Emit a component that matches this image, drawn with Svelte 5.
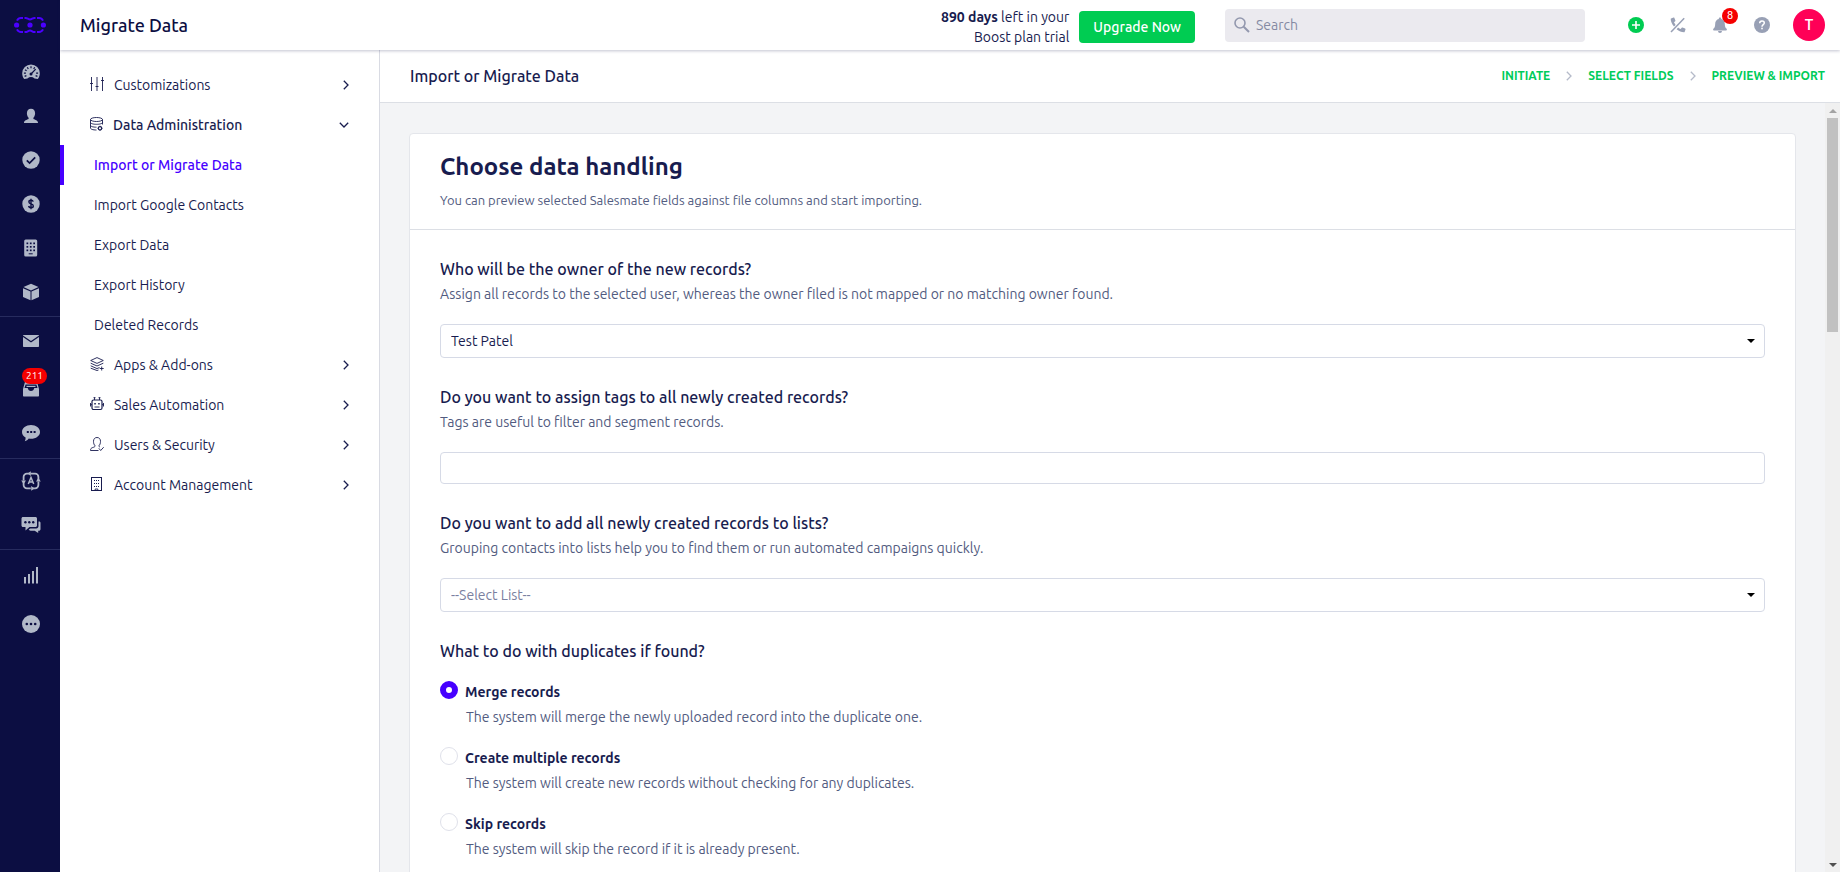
<script>
  const railGroups = [
    { size: 'a', items: ['Dashboard', 'Contacts', 'Activities', 'Deals', 'Companies', 'Products'] },
    { size: 'b', items: ['Email', 'Inbox', 'Text'] },
    { size: 'a', items: ['Automation', 'Chats'] },
    { size: 'c', items: ['Reports', 'More'] }
  ];

  const dataPages = ['Import or Migrate Data', 'Import Google Contacts', 'Export Data', 'Export History', 'Deleted Records'];
  const sections = [
    { name: 'Customizations' },
    { name: 'Data Administration', pages: dataPages },
    { name: 'Apps & Add-ons' },
    { name: 'Sales Automation' },
    { name: 'Users & Security' },
    { name: 'Account Management' }
  ];

  const steps = ['Initiate', 'Select Fields', 'Preview & Import'];

  const duplicateModes = [
    { id: 'merge', title: 'Merge records', text: 'The system will merge the newly uploaded record into the duplicate one.' },
    { id: 'create', title: 'Create multiple records', text: 'The system will create new records without checking for any duplicates.' },
    { id: 'skip', title: 'Skip records', text: 'The system will skip the record if it is already present.' }
  ];

  let mode = $state('merge');
  let owner = $state('Test Patel');
  let tags = $state('');
  let list = $state('');
</script>

{#snippet railIcon(name)}
  <svg width="20" height="20" viewBox="0 0 20 20" fill="currentColor" aria-hidden="true">
    {#if name === 'Dashboard'}
      <path d="M3.2 17C1.8 15.3 1.2 13.4 1.2 11.3a8.8 8.8 0 0 1 17.6 0c0 2.1-.6 4-2 5.7l-3.2-.6a6 6 0 0 0-7.2 0z" />
      <g stroke="#0c0e42" stroke-width="1.2" fill="none">
        <path d="M10 4.2v2M6.3 5.2l1 1.8M13.7 5.2l-1 1.8M4 7.8l1.600 1M2.900 11.200h2M15.100 11.200h2M3.600 14.400l1.800-.8M16.400 14.400l-1.800-.8M14.700 7.200 10 12" />
      </g>
      <circle cx="10" cy="12" r="1.5" fill="#0c0e42" />
    {:else if name === 'Contacts'}
      <path d="M10 2.800c2.700 0 4.100 1.900 4.100 4.400 0 1.800-.7 3.500-1.700 4.500v1.200c1.700.9 4.600 1.200 4.600 3.800v.3H3v-.3c0-2.600 2.900-2.900 4.600-3.800v-1.200c-1-1-1.700-2.700-1.700-4.500 0-2.500 1.400-4.400 4.100-4.400z" />
    {:else if name === 'Activities'}
      <circle cx="10" cy="10" r="8.700" />
      <path d="m5.800 10.300 2.800 2.700 5.600-5.700" fill="none" stroke="#0c0e42" stroke-width="1.700" />
    {:else if name === 'Deals'}
      <circle cx="10" cy="10" r="8.700" />
      <path d="M12.200 7.700c-.2-1-1-1.400-2.200-1.400s-2.100.6-2.100 1.700c0 2.600 4.400 1.200 4.400 3.900 0 1.100-.9 1.800-2.300 1.800-1.300 0-2.200-.6-2.400-1.700M10 4.800v10.400" fill="none" stroke="#0c0e42" stroke-width="1.400" />
    {:else if name === 'Companies'}
      <rect x="3.200" y="1.500" width="13" height="17" rx="1.500" />
      <g fill="#0c0e42">
        {#each [4.5, 8, 11.5] as y}
          {#each [5.5, 8.9, 12.3] as x}<rect {x} {y} width="1.700" height="1.700" />{/each}
        {/each}
        <rect x="7.700" y="15.300" width="4" height="1" />
      </g>
    {:else if name === 'Products'}
      <path d="m10 1.800 7.500 3.300L10 8.500 2.500 5.100z M2 6.300l7.500 3.200v8.700L2 15z M18 6.300l-7.500 3.200v8.700L18 15z" />
    {:else if name === 'Email'}
      <path d="M3 4h14c.6 0 1 .4 1 1v10c0 .6-.4 1-1 1H3c-.6 0-1-.4-1-1V5c0-.6.4-1 1-1z" />
      <path d="m2 5.200 8 5.600 8-5.600" fill="none" stroke="#0c0e42" stroke-width="1.300" />
    {:else if name === 'Inbox'}
      <path d="M4 5h12l2 7v6.500c0 .6-.4 1-1 1H3c-.6 0-1-.4-1-1V12z" />
      <path d="M4.600 7.500h10.800l1.100 3.500h-3.200c-.4 1.800-1.600 3-3.300 3s-2.900-1.200-3.300-3H3.500z" fill="#0c0e42" />
      <path d="M5.500 8.800h9V10h-9z" />
    {:else if name === 'Text'}
      <path d="M10 2c5 0 9 3 9 6.900 0 3.800-4 6.900-9 6.900-.8 0-1.500-.1-2.200-.2-1 1.300-2.400 2.300-4 2.600.6-1.100.9-2.400.8-3.700C2.400 13.200 1 11.200 1 8.900 1 5 5 2 10 2z" />
      <g fill="#0c0e42"><rect x="5.800" y="8" width="2" height="2" /><rect x="9.200" y="8" width="2" height="2" /><rect x="12.600" y="8" width="2" height="2" /></g>
    {:else if name === 'Automation'}
      <g fill="none" stroke="currentColor" stroke-width="1.800">
        <path d="M9.500 2.600h4.600c1.800 0 3.300 1.500 3.300 3.300V9M17.400 10.500v3.600c0 1.800-1.500 3.300-3.300 3.300h-2.500M9.800 17.400H5.900c-1.800 0-3.300-1.500-3.300-3.300V11M2.600 9.500V5.900c0-1.800 1.500-3.300 3.300-3.300h2" />
        <path d="m7.300 13 2.700-6.500 2.700 6.500M8.200 11h3.600" stroke-width="1.500" />
      </g>
      <path d="M9.800.2v4.800L6.500 2.600zM19.800 10.400H15l2.400-3.300zM10.200 19.800V15l3.300 2.400zM.2 9.600H5l-2.400 3.300z" />
    {:else if name === 'Chats'}
      <path d="M2 2h12.500c.8 0 1.500.7 1.500 1.500v7c0 .8-.7 1.500-1.500 1.500H8.500L4.500 15.500V12H2C1.200 12 .5 11.300.5 10.500v-7C.5 2.700 1.200 2 2 2z" />
      <path d="M17.500 6.500h.7c.8 0 1.300.6 1.300 1.400v6.400c0 .8-.7 1.500-1.500 1.500h-.8V18l-3.500-2.200H9.500c-.8 0-1.500-.5-1.700-1.200l1.500-1.200h6c1.200 0 2.200-1 2.200-2.200z" />
      <g fill="#0c0e42"><circle cx="4.400" cy="7.200" r="1.200" /><circle cx="8.300" cy="7.200" r="1.200" /><circle cx="12.200" cy="7.200" r="1.200" /></g>
    {:else if name === 'Reports'}
      <path d="M3 12h2v6.500H3zM7 9h2v9.500H7zM11 6h2v12.500h-2zM15 2h2v16.500h-2z" />
    {:else}
      <circle cx="10" cy="10" r="9" />
      <g fill="#0c0e42"><circle cx="5.800" cy="10" r="1.300" /><circle cx="10" cy="10" r="1.300" /><circle cx="14.200" cy="10" r="1.300" /></g>
    {/if}
  </svg>
{/snippet}

{#snippet sectionIcon(name)}
  <svg class="glyph" width="14" height="14" viewBox="0 0 14 14" fill="none" stroke="currentColor" stroke-width="0.9" aria-hidden="true">
    {#if name === 'Customizations'}
      <path d="M1.500 0v14M7 0v14M12.500 0v14M0 6.500h3M5.500 9.500h3M11 3.500h3" />
    {:else if name === 'Data Administration'}
      <ellipse cx="6.500" cy="2.500" rx="6" ry="2" />
      <path d="M.5 2.500v8.500c0 1.200 2.300 2 6 2M12.500 2.500v5M.5 5.400c0 1.100 2.700 1.900 6 1.900s6-.8 6-1.900M.5 8.300c0 1.100 2.500 1.900 6 1.900" />
      <circle cx="10" cy="11.300" r="1.700" stroke-width="1.200" />
      <path d="M10 8.800v1M10 12.900v1M7.700 11.300h-.5M12.800 11.300h-.5" />
    {:else if name === 'Apps & Add-ons'}
      <path d="M7 .6 13.300 3.500 7 6.400.7 3.500zM.7 6.200 7 9l6.300-2.800M.7 8.800 7 11.600l2.500-1.100M.7 11.200 7 13.500l1.500-.5M11.700 9.500v4M9.700 11.500h4" />
    {:else if name === 'Sales Automation'}
      <rect x="2" y="3" width="10" height="9.500" rx="1.500" stroke-width="1.200" />
      <path d="M4.500 3V.5M9.500 3V.5M3.500.7h2M8.500.7h2M.5 6v3.500M13.500 6v3.500M0 7.700h2M12 7.700h2M4.500 10h5" />
      <path d="M4.300 6.700h1.500M8.200 6.700h1.500" stroke-width="1.600" />
    {:else if name === 'Users & Security'}
      <path d="M8.500 13.500H.5c0-1.900.8-2.500 2.300-3 1.300-.4 2.300-.7 2.300-1.700C4 7.800 3.500 6.200 3.500 4.300 3.500 2 4.800.5 7 .5s3.500 1.500 3.500 3.800c0 1.900-.5 3.500-1.600 4.500 0 .7.300 1 .9 1.300M8.800 11.300l1.900 2.200 3-3.300" />
    {:else}
      <rect x="1.500" y=".5" width="10" height="13" stroke-width="1" />
      <path d="M4 3.500h1M6 3.500h1M8 3.500h1M4 6.500h1M6 6.500h1M8 6.500h1M4 9.500h1M6 9.500h1M8 9.500h1" stroke-width="1.200" />
      <path d="M5.200 13.500v-1.500h2.600v1.500" />
    {/if}
  </svg>
{/snippet}

{#snippet chevron()}
  <svg class="chevron" width="6" height="10" viewBox="0 0 6 10" fill="none" stroke="currentColor" stroke-width="1.300" aria-hidden="true"><path d="m.8.8 4.200 4.200L.8 9.200" /></svg>
{/snippet}

<div class="app">
  <nav class="rail" aria-label="Main">
    <a class="logo" href="#home" aria-label="Home">
      <svg width="32" height="16" viewBox="0 0 32 16" fill="none" stroke="#4b00ff" stroke-width="2" aria-hidden="true">
        <path d="M9 1H6.800C5 1 3.800 2 3 3.600M3 12.400C3.800 14 5 15 6.800 15H9M10.500 1h1.200c1.600 0 2.600 1.500 4.300 1.500S18.700 1 20.300 1h1.200M10.500 15h1.200c1.600 0 2.600-1.500 4.300-1.500s2.700 1.500 4.300 1.500h1.200M23 1h2.200C27 1 28.200 2 29 3.600M29 12.400C28.200 14 27 15 25.200 15H23" />
        <g fill="#4b00ff" stroke="none"><circle cx="2.600" cy="8" r="2.600" /><circle cx="16" cy="8" r="2.600" /><circle cx="29.400" cy="8" r="2.600" /></g>
      </svg>
    </a>
    {#each railGroups as group}
      <ul class="group {group.size}">
        {#each group.items as item}
          <li>
            <a href="#{item.toLowerCase()}" aria-label={item}>
              {@render railIcon(item)}
              {#if item === 'Inbox'}<span class="count">211</span>{/if}
            </a>
          </li>
        {/each}
      </ul>
    {/each}
  </nav>

  <div class="page">
    <header class="topbar">
      <h1>Migrate Data</h1>
      <p class="trial"><b>890 days</b> left in your<br />Boost plan trial</p>
      <button class="upgrade">Upgrade Now</button>
      <label class="search">
        <svg width="16" height="16" viewBox="0 0 16 16" fill="none" stroke="currentColor" aria-hidden="true"><circle cx="6" cy="6" r="5" stroke-width="1.600" /><path d="m9.700 9.700 5.300 5.300" stroke-width="2" /></svg>
        <input type="search" placeholder="Search" aria-label="Search" />
      </label>
      <div class="actions">
        <button class="add" aria-label="Add">
          <svg width="16" height="16" viewBox="0 0 16 16" aria-hidden="true"><circle cx="8" cy="8" r="8" fill="currentColor" /><path d="M8 4v8M4 8h8" stroke="#fff" stroke-width="1.600" /></svg>
        </button>
        <button aria-label="Calls">
          <svg width="16" height="16" viewBox="0 0 16 16" fill="currentColor" aria-hidden="true">
            <path d="M1 1.600 3.500.5c.4-.1.700 0 .9.400l1 2.600c.1.300 0 .6-.2.800L4 5.300c.4.900 1 1.800 1.600 2.600L4 9.500C2 7.300.8 4.600.7 2.100c0-.2.100-.4.300-.5zM8.100 10.400c.8.700 1.700 1.200 2.600 1.600l1-1.200c.2-.2.500-.3.800-.2l2.600 1c.4.200.5.500.4.900l-.9 2.400c-.1.200-.3.400-.6.400-2.600-.1-5-1-7.400-3z" />
            <path d="M14.200 1.200 1 15" fill="none" stroke="currentColor" stroke-width="1.500" />
          </svg>
        </button>
        <button aria-label="Notifications" class="bell">
          <svg width="16" height="16" viewBox="0 0 16 16" fill="currentColor" aria-hidden="true"><path d="M8 .5c.7 0 1.200.5 1.200 1.200v.4c2.200.5 3.600 2.300 3.600 4.700 0 3.200.8 4.200 1.800 5 .5.400.4 1.700-.5 1.700H1.900c-.9 0-1-1.300-.5-1.700 1-.8 1.800-1.800 1.800-5 0-2.400 1.400-4.200 3.600-4.700v-.4C6.800 1 7.300.5 8 .5zM6 14h4a2 2 0 0 1-4 0z" /></svg>
          <span class="bubble">8</span>
        </button>
        <button aria-label="Help">
          <svg width="16" height="16" viewBox="0 0 16 16" aria-hidden="true"><circle cx="8" cy="8" r="8" fill="currentColor" /><path d="M5.700 6.300C5.700 4.900 6.600 4 8 4s2.300.8 2.300 2.100C10.300 7.600 8 7.800 8 9.700" fill="none" stroke="#fff" stroke-width="1.500" /><rect x="7.200" y="10.700" width="1.600" height="1.600" fill="#fff" /></svg>
        </button>
      </div>
      <button class="avatar" aria-label="Account">T</button>
    </header>

    <div class="body">
      <nav class="menu" aria-label="Settings">
        {#each sections as section}
          <button class="section" class:open={section.pages} aria-expanded={!!section.pages}>
            {@render sectionIcon(section.name)}
            <span>{section.name}</span>
            {@render chevron()}
          </button>
          {#if section.pages}
            {#each section.pages as page, i}
              <a class="sub" class:active={i === 0} href="#page-{i}">{page}</a>
            {/each}
          {/if}
        {/each}
      </nav>

      <main>
        <div class="heading">
          <h2>Import or Migrate Data</h2>
          <ol class="steps">
            {#each steps as step, i}
              {#if i}<li class="sep" aria-hidden="true">{@render chevron()}</li>{/if}
              <li>{step}</li>
            {/each}
          </ol>
        </div>

        <div class="scroller">
          <div class="content">
            <form class="card">
              <div class="intro">
                <h3>Choose data handling</h3>
                <p>You can preview selected Salesmate fields against file columns and start importing.</p>
              </div>
              <div class="fields">
                <div class="field">
                  <label for="owner">Who will be the owner of the new records?</label>
                  <p>Assign all records to the selected user, whereas the owner filed is not mapped or no matching owner found.</p>
                  <div class="pick">
                    <select id="owner" bind:value={owner}><option>Test Patel</option></select>
                  </div>
                </div>
                <div class="field">
                  <label for="tags">Do you want to assign tags to all newly created records?</label>
                  <p>Tags are useful to filter and segment records.</p>
                  <input id="tags" type="text" bind:value={tags} />
                </div>
                <div class="field">
                  <label for="list">Do you want to add all newly created records to lists?</label>
                  <p>Grouping contacts into lists help you to find them or run automated campaigns quickly.</p>
                  <div class="pick">
                    <select id="list" class="empty" bind:value={list}><option value="">--Select List--</option></select>
                  </div>
                </div>
                <fieldset>
                  <legend>What to do with duplicates if found?</legend>
                  {#each duplicateModes as m}
                    <div class="choice">
                      <input type="radio" name="duplicates" id={m.id} value={m.id} bind:group={mode} />
                      <label for={m.id}>{m.title}</label>
                      <p>{m.text}</p>
                    </div>
                  {/each}
                </fieldset>
              </div>
            </form>
          </div>
          <div class="scrollbar" aria-hidden="true">
            <i class="up"></i>
            <div class="track"><div class="thumb"></div></div>
            <i class="down"></i>
          </div>
        </div>
      </main>
    </div>
  </div>
</div>

<style>
  :global(body) { margin: 0; }
  .app, .app :global(*) { box-sizing: border-box; }
  .app {
    display: flex;
    height: 100vh;
    overflow: hidden;
    font: 14px/20px Ubuntu, "Noto Sans", sans-serif;
    color: #181c4f;
    background: #fff;
  }
  h1, h2, h3, p, ul, ol, fieldset { margin: 0; padding: 0; }
  ul, ol { list-style: none; }
  a { color: inherit; text-decoration: none; }
  button { border: 0; padding: 0; background: none; font: inherit; color: inherit; cursor: pointer; }
  svg { display: block; flex: none; }

  .rail { flex: none; width: 60px; background: #0c0e42; color: #b1b8c8; }
  .logo { display: flex; align-items: center; justify-content: center; height: 50px; }
  .group li a { position: relative; display: flex; align-items: center; justify-content: center; height: 44px; padding-left: 2px; }
  .group { padding-bottom: 2px; border-bottom: 1px solid #272b5e; }
  .group:last-child { border: 0; }
  .group.b { padding-top: 1px; }
  .group.b li a { height: 46px; }
  .group.c li a { height: 49px; }
  .count {
    position: absolute; top: 4px; left: 22px;
    height: 16px; min-width: 25px; border-radius: 8px;
    background: #f50000; color: #fff; font-size: 10px; line-height: 16px; text-align: center;
  }

  .page { flex: 1; min-width: 0; display: flex; flex-direction: column; }
  .topbar {
    position: relative; z-index: 1; flex: none;
    display: flex; align-items: center; height: 50px; padding: 0 15px 0 20px;
    background: #fff; box-shadow: 0 1px 3px rgba(24, 28, 79, .26);
  }
  h1 { flex: 1; font-size: 18px; line-height: 24px; font-weight: 500; color: #0c0e42; }
  .trial { text-align: right; padding-top: 4px; }
  .upgrade {
    height: 32px; margin: 4px 30px 0 10px; padding: 0 14px; border-radius: 4px;
    background: #00cc52; color: #fff; font-weight: 500;
  }
  .search {
    display: flex; align-items: center; gap: 6px; flex: 0 1 360px; height: 33px; padding: 0 9px;
    border-radius: 4px; background: #ebeaef; color: #9398ae;
  }
  .search input { flex: 1; min-width: 0; border: 0; padding: 0; background: none; font: inherit; outline: 0; color: #181c4f; }
  .search input::placeholder { color: #858aa3; }
  .actions { display: flex; gap: 26px; margin: 0 23px 0 43px; color: #98a0b5; }
  .add { color: #00cc52; }
  .bell { position: relative; }
  .bubble {
    position: absolute; left: 10px; top: -9px; width: 16px; height: 16px; border-radius: 8px;
    background: #f50000; color: #fff; font: 11px/16px Roboto, sans-serif; text-align: center;
  }
  .avatar { width: 32px; height: 32px; border-radius: 16px; background: #ff0057; color: #fff; font: 500 14px/32px Roboto, sans-serif; }

  .body { flex: 1; min-height: 0; display: flex; }
  .menu { flex: none; width: 320px; padding-top: 15px; border-right: 1px solid #d9dbe3; overflow: hidden; }
  .section { display: flex; align-items: center; gap: 10px; width: 100%; height: 40px; padding: 0 30px; text-align: left; }
  .section span { flex: 1; }
  .glyph { margin-bottom: 2px; }
  .section.open { font-weight: 500; gap: 9px; padding-right: 32px; }
  .section.open .chevron { transform: rotate(90deg); }
  .sub { display: flex; align-items: center; height: 40px; padding-left: 34px; }
  .sub.active { padding-left: 30px; border-left: 4px solid #4600ff; color: #4600ff; font-weight: 500; }

  main { flex: 1; min-width: 0; display: flex; flex-direction: column; }
  .heading {
    flex: none; display: flex; justify-content: space-between; align-items: center;
    height: 53px; padding: 0 15px 0 30px; border-bottom: 1px solid #dcdfe5;
  }
  h2 { font-size: 16px; line-height: 24px; font-weight: 500; }
  .steps { display: flex; align-items: center; gap: 16px; font-size: 12px; font-weight: 700; text-transform: uppercase; color: #00cc5a; }
  .sep { color: #b5bac9; }

  .scroller { flex: 1; min-height: 0; display: flex; background: #f3f4f6; }
  .content { flex: 1; min-width: 0; padding: 30px 29px; overflow: auto; scrollbar-width: none; }
  .card { border: 1px solid #e4e6eb; border-radius: 4px; background: #fff; }
  .intro { padding: 16px 30px 18px; border-bottom: 1px solid #dcdfe5; }
  h3 { margin-bottom: 5px; font-size: 24px; line-height: 34px; font-weight: 700; }
  .intro p { font-size: 13px; line-height: 22px; color: #525b80; }
  .fields { display: flex; flex-direction: column; gap: 27px; padding: 27px 30px; }
  .field > label, legend { display: block; padding: 0; font-size: 16px; line-height: 24px; font-weight: 500; }
  .field > label { margin-bottom: 1px; }
  .field p, .choice p { line-height: 24px; color: #525b80; }
  .field p { margin-bottom: 18px; }
  .pick { position: relative; }
  .pick::after {
    content: ""; position: absolute; right: 10px; top: 15px;
    border: 4px solid transparent; border-top-color: #000; border-bottom: 0; pointer-events: none;
  }
  select, #tags {
    display: block; width: 100%; height: 34px; padding: 0 10px; border: 1px solid #d6dae6; border-radius: 4px;
    appearance: none; background: #fff; font: inherit; color: #181c4f;
  }
  #tags { height: 32px; }
  select.empty { color: #7a80a0; }
  fieldset { min-width: 0; border: 0; }
  legend { margin-bottom: 17px; }
  .choice { display: grid; grid-template-columns: 18px 1fr; column-gap: 7px; row-gap: 1px; margin-bottom: 17px; }
  .choice label { line-height: 24px; font-weight: 700; }
  .choice p { grid-column: 2; padding-left: 1px; }
  .choice input { appearance: none; width: 18px; height: 18px; margin: 1px 0 0; border: 1px solid #dfe1ea; border-radius: 50%; background: #fff; }
  .choice input:checked { border: 6px solid #4600ff; }

  .scrollbar { flex: none; display: flex; flex-direction: column; width: 15px; background: #f0f0f0; }
  .scrollbar i { height: 15px; display: flex; align-items: center; justify-content: center; }
  .scrollbar i::before { content: ""; border: 0 solid transparent; border-width: 0 4px; }
  .scrollbar .up::before { border-bottom: 4px solid #a3a3a3; }
  .scrollbar .down::before { border-top: 4px solid #505050; }
  .track { flex: 1; padding: 0 2px; }
  .thumb { height: 29%; background: #c1c1c1; }
</style>
